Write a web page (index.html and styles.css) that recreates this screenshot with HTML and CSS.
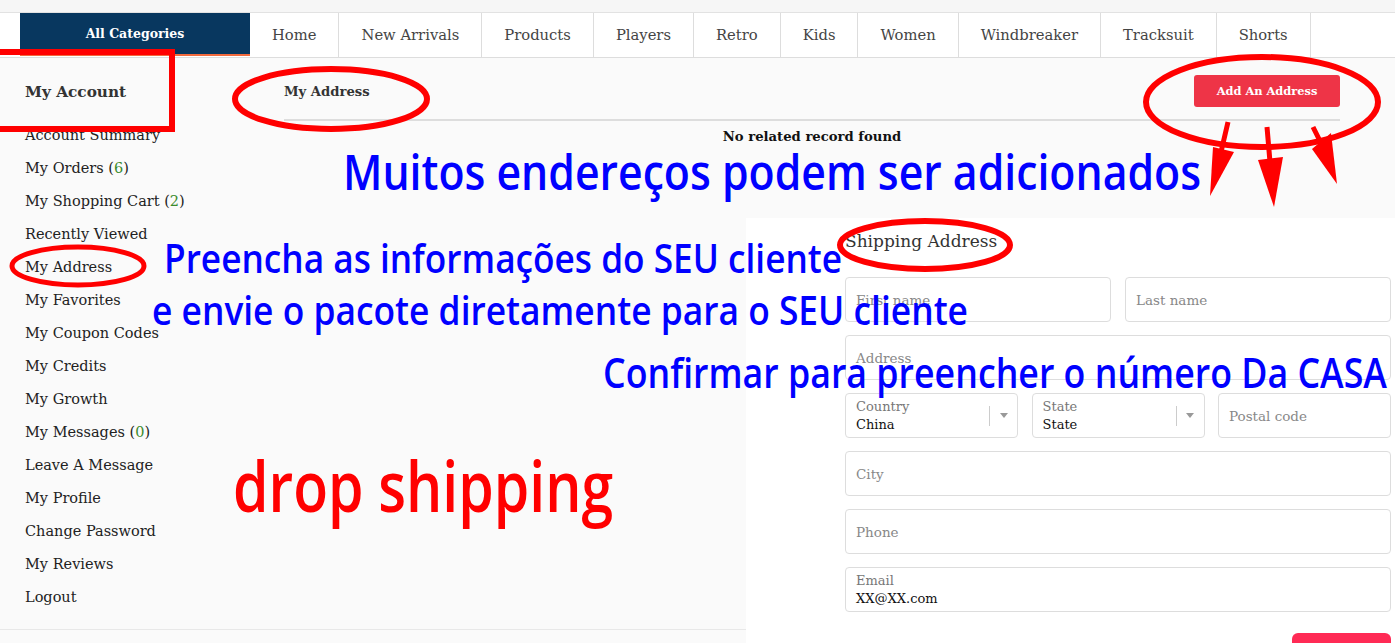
FILE: index.html
```html
<!DOCTYPE html>
<html lang="pt">
  <head>
    <meta charset="UTF-8" />
    <meta name="viewport" content="width=device-width, initial-scale=1.0" />
    <title>My Address</title>
    <link rel="stylesheet" href="styles.css">
  </head>
  <body>
    <div class="topbar"></div>

    <nav class="nav">
      <a class="nav-cat" href="#">All Categories</a>
      <a class="nav-item" href="#">Home</a>
      <a class="nav-item" href="#">New Arrivals</a>
      <a class="nav-item" href="#">Products</a>
      <a class="nav-item" href="#">Players</a>
      <a class="nav-item" href="#">Retro</a>
      <a class="nav-item" href="#">Kids</a>
      <a class="nav-item" href="#">Women</a>
      <a class="nav-item" href="#">Windbreaker</a>
      <a class="nav-item" href="#">Tracksuit</a>
      <a class="nav-item" href="#">Shorts</a>
    </nav>

    <div class="account">
      <aside class="sidebar">
        <h2 class="sidebar-title">My Account</h2>
        <ul class="menu">
          <li>Account Summary</li>
          <li>My Orders (<span class="count">6</span>)</li>
          <li>My Shopping Cart (<span class="count">2</span>)</li>
          <li>Recently Viewed</li>
          <li>My Address</li>
          <li>My Favorites</li>
          <li>My Coupon Codes</li>
          <li>My Credits</li>
          <li>My Growth</li>
          <li>My Messages (<span class="count">0</span>)</li>
          <li>Leave A Message</li>
          <li>My Profile</li>
          <li>Change Password</li>
          <li>My Reviews</li>
          <li>Logout</li>
        </ul>
      </aside>

      <main class="content">
        <div class="content-head">
          <h1 class="content-title">My Address</h1>
          <button class="btn-add">Add An Address</button>
        </div>
        <p class="empty">No related record found</p>
      </main>
    </div>

    <div class="footer"></div>

    <!-- drawer opened by "Add An Address" -->
    <section class="drawer">
      <h3 class="drawer-title">Shipping Address</h3>
      <div class="row">
        <div class="field"><span class="ph">First name</span></div>
        <div class="field"><span class="ph">Last name</span></div>
      </div>
      <div class="row">
        <div class="field"><span class="ph">Address</span></div>
      </div>
      <div class="row row-3">
        <div class="field field-select">
          <div class="field-body">
            <span class="label">Country</span>
            <span class="value">China</span>
          </div>
          <span class="sep"></span>
          <span class="caret"></span>
        </div>
        <div class="field field-select">
          <div class="field-body">
            <span class="label">State</span>
            <span class="value">State</span>
          </div>
          <span class="sep"></span>
          <span class="caret"></span>
        </div>
        <div class="field"><span class="ph">Postal code</span></div>
      </div>
      <div class="row">
        <div class="field"><span class="ph">City</span></div>
      </div>
      <div class="row">
        <div class="field"><span class="ph">Phone</span></div>
      </div>
      <div class="row">
        <div class="field">
          <span class="label">Email</span>
          <span class="value">XX@XX.com</span>
        </div>
      </div>
      <div class="drawer-foot">
        <button class="btn-save" aria-label="Save"></button>
      </div>
    </section>

    <!-- annotations drawn over the screenshot -->
    <svg class="notes" width="1395" height="643" viewBox="0 0 1395 643">
      <g class="marks">
        <rect x="-10" y="52" width="182" height="77" class="mark-thick" />
        <ellipse cx="331" cy="99" rx="96" ry="30" class="mark-thick" />
        <ellipse cx="78" cy="266" rx="66" ry="19" class="mark-thin" />
        <ellipse cx="1262" cy="102" rx="116" ry="45" class="mark-thick" />
        <ellipse cx="925" cy="245" rx="85" ry="24" class="mark-thick" />
        <path d="M1228 122 L1221 152 M1267 127 L1270 162 M1313 127 L1322 145" class="mark-thin" />
      </g>
      <g class="heads">
        <polygon points="1210,196 1213,147 1234,152" />
        <polygon points="1274,207 1258,160 1283,157" />
        <polygon points="1337,184 1312,149 1331,133" />
      </g>
      <text x="343" y="190" class="note note-1" textLength="858" lengthAdjust="spacingAndGlyphs">Muitos endereços podem ser adicionados</text>
      <text x="164" y="273" class="note note-2" textLength="678" lengthAdjust="spacingAndGlyphs">Preencha as informações do SEU cliente</text>
      <text x="152" y="325" class="note note-2" textLength="816" lengthAdjust="spacingAndGlyphs">e envie o pacote diretamente para o SEU cliente</text>
      <text x="603" y="388" class="note note-3" textLength="784" lengthAdjust="spacingAndGlyphs">Confirmar para preencher o número Da CASA</text>
      <text x="233" y="512" class="note note-red" textLength="380" lengthAdjust="spacingAndGlyphs">drop shipping</text>
    </svg>
  </body>
</html>
```

FILE: styles.css
```css
html, body {
  height: 643px;
  overflow: hidden;
}
body {
  margin: 0;
  position: relative;
  background: #fafafa;
  font-family: "DejaVu Serif", serif;
  color: #222;
}
a {
  text-decoration: none;
}

.topbar {
  height: 12px;
  background: #f6f6f6;
}

/* top navigation */
.nav {
  display: flex;
  height: 44px;
  padding-left: 20px;
  background: #fff;
  border-top: 1px solid #e2e2e2;
  border-bottom: 1px solid #ddd;
}
.nav-cat {
  width: 230px;
  height: 43px;
  box-sizing: border-box;
  display: flex;
  align-items: center;
  justify-content: center;
  background: #08375f;
  border-bottom: 2px solid #f26a3d;
  color: #fff;
  font-weight: bold;
  font-size: 12.5px;
}
.nav-item {
  display: flex;
  align-items: center;
  padding: 0 22px 1px;
  border-right: 1px solid #ddd;
  color: #444;
  font-size: 14.75px;
}

/* account page */
.account {
  display: flex;
}
.sidebar {
  width: 284px;
  flex: none;
  box-sizing: border-box;
  padding: 24px 0 15px 25px;
}
.sidebar-title {
  margin: 0 0 17px;
  font-size: 15.3px;
  line-height: 20px;
  color: #333;
}
.menu {
  list-style: none;
  margin: 0;
  padding: 0;
}
.menu li {
  font-size: 14.5px;
  line-height: 33px;
  color: #222;
}
.count {
  color: #3a8a2c;
}

.content {
  flex: 1;
  padding-right: 55px;
}
.content-head {
  display: flex;
  align-items: center;
  justify-content: space-between;
  padding: 17px 0 12px;
  border-bottom: 2px solid #ddd;
}
.content-title {
  margin: 0;
  font-size: 13.2px;
  color: #333;
}
.btn-add {
  width: 146px;
  height: 32px;
  border: 0;
  border-radius: 3px;
  background: #ee3447;
  color: #fff;
  font-family: inherit;
  font-weight: bold;
  font-size: 11.4px;
}
.empty {
  margin: 6px 0 0;
  text-align: center;
  font-weight: bold;
  font-size: 13.2px;
  line-height: 20px;
  color: #111;
}

.footer {
  height: 20px;
  border-top: 1px solid #e8e8e8;
}

/* shipping address drawer */
.drawer {
  position: absolute;
  top: 218px;
  left: 746px;
  right: 0;
  height: 470px;
  box-sizing: border-box;
  padding: 11px 4px 0 99px;
  background: #fff;
}
.drawer-title {
  margin: 0 0 24px;
  font-weight: normal;
  font-size: 17px;
  line-height: 24px;
  color: #333;
}
.row {
  display: grid;
  grid-auto-flow: column;
  grid-auto-columns: 1fr;
  gap: 14px;
  margin-bottom: 13px;
}
.row-3 {
  gap: 13.5px;
}
.field {
  height: 45px;
  box-sizing: border-box;
  display: flex;
  flex-direction: column;
  justify-content: center;
  padding: 0 10px;
  border: 1px solid #ddd;
  border-radius: 4px;
  background: #fff;
}
.ph {
  font-size: 13.5px;
  color: #888;
}
.label {
  font-size: 13px;
  line-height: 18px;
  color: #777;
}
.value {
  font-size: 13px;
  line-height: 18px;
  color: #111;
}
.field-select {
  flex-direction: row;
  align-items: center;
  padding-right: 0;
}
.field-body {
  flex: 1;
  display: flex;
  flex-direction: column;
}
.sep {
  width: 1px;
  height: 20px;
  background: #ccc;
}
.caret {
  width: 27px;
  display: flex;
  justify-content: center;
}
.caret::before {
  content: "";
  border-left: 4px solid transparent;
  border-right: 4px solid transparent;
  border-top: 5px solid #999;
}
.drawer-foot {
  display: flex;
  justify-content: flex-end;
  padding-top: 8px;
}
.btn-save {
  width: 99px;
  height: 38px;
  border: 0;
  border-radius: 6px;
  background: #ff2a55;
}

/* annotation overlay */
.notes {
  position: absolute;
  top: 0;
  left: 0;
  pointer-events: none;
}
.marks {
  fill: none;
  stroke: #f00;
}
.mark-thick {
  stroke-width: 6px;
}
.mark-thin {
  stroke-width: 5px;
}
.heads {
  fill: #f00;
}
.note {
  font-family: "Open Sans", sans-serif;
  font-weight: 600;
  fill: #0000ff;
}
.note-1 {
  font-size: 49px;
}
.note-2 {
  font-size: 39px;
}
.note-3 {
  font-size: 41px;
}
.note-red {
  font-size: 70px;
  fill: #ff0000;
}
```
